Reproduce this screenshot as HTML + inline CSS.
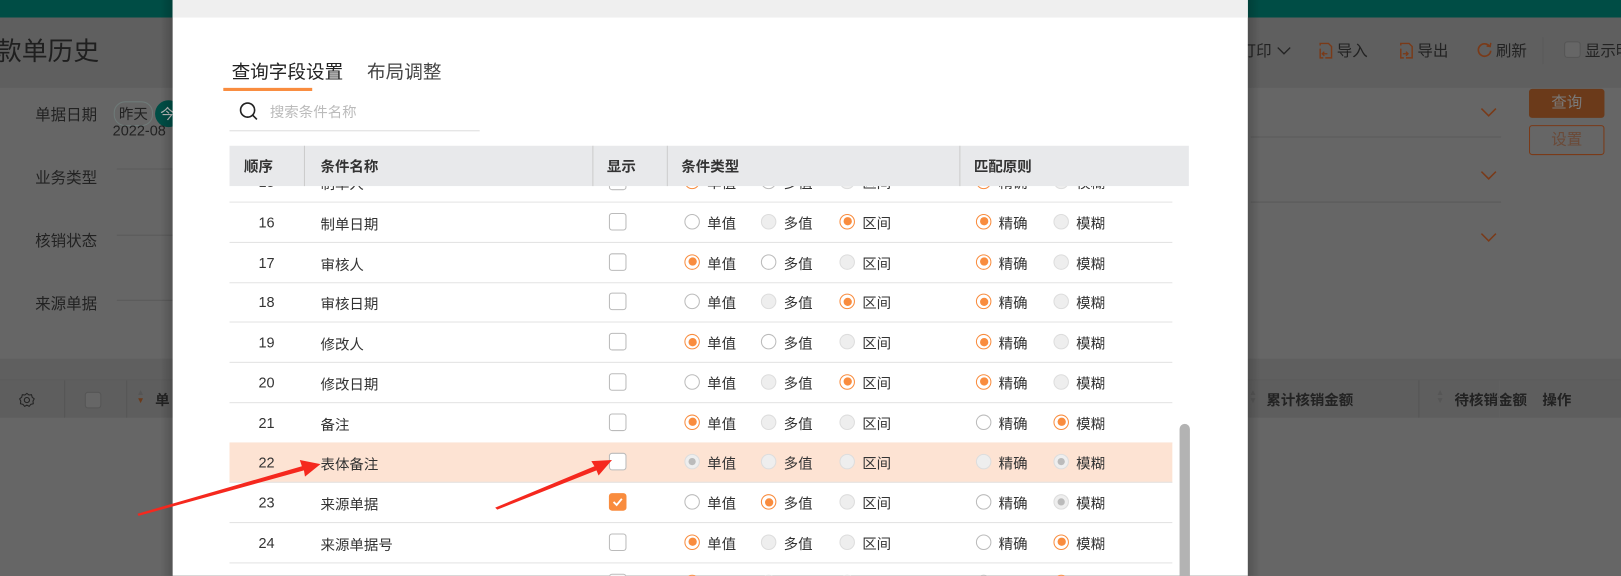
<!DOCTYPE html>
<html><head><meta charset="utf-8"><style>
html,body{margin:0;padding:0;width:1621px;height:576px;overflow:hidden;background:#666}
#w{position:absolute;left:0;top:0;width:1568px;height:557px;transform:scale(1.03380);transform-origin:0 0;font-family:"Liberation Sans","Noto Sans CJK SC",sans-serif;color:#333;overflow:hidden}
.a{position:absolute;white-space:nowrap}
.lbl{font-size:15px;color:#222}
.cb{position:absolute;width:15px;height:15px;border:1px solid #bbb;border-radius:3px;background:#fff}
.r{position:absolute;width:15px;height:15px;border-radius:50%;box-sizing:border-box}
.rw{border:1px solid #bbb;background:#fff}
.rd{border:1px solid #ddd;background:#eee}
.rs{border:1px solid #f98c3e;background:#fff}
.rs::after{content:"";position:absolute;left:2.5px;top:2.5px;width:8px;height:8px;border-radius:50%;background:#f98c3e}
.rg{border:1px solid #ddd;background:#eee}
.rg::after{content:"";position:absolute;left:3px;top:3px;width:7px;height:7px;border-radius:50%;background:#bbb}
.t{position:absolute;font-size:14px;color:#333}
.row{position:absolute;left:222px;width:912px;height:38px;border-bottom:1px solid #e3e3e3}
</style></head><body><div id="w">
<div class="a" style="left:0;top:0;width:1568px;height:17px;background:#004d45"></div>
<div class="a" style="left:0;top:17px;width:1568px;height:68px;background:#5f5f5f"></div>
<div class="a" style="left:0;top:85px;width:1568px;height:262px;background:#666"></div>
<div class="a" style="left:0;top:347px;width:1568px;height:20px;background:#5f5f5f"></div>
<div class="a" style="left:0;top:367px;width:1568px;height:1px;background:#5a5a5a"></div>
<div class="a" style="left:0;top:368px;width:1568px;height:36px;background:#5e5e5e"></div>
<div class="a" style="left:0;top:404px;width:1568px;height:153px;background:#666"></div>
<div class="a" style="left:-4px;top:30px;font-size:25px;color:#1f1f1f">款单历史</div>
<div class="a lbl" style="left:34px;top:100px">单据日期</div>
<div class="a lbl" style="left:34px;top:161px">业务类型</div>
<div class="a lbl" style="left:34px;top:222px">核销状态</div>
<div class="a lbl" style="left:34px;top:283px">来源单据</div>
<div class="a" style="left:110px;top:98px;width:36px;height:22px;border:1px solid #6e7a78;border-radius:11px;font-size:14px;color:#222;text-align:center;line-height:22px">昨天</div>
<div class="a" style="left:150px;top:97px;width:26px;height:26px;border-radius:13px;background:#004d45;color:#bbb;font-size:14px;line-height:26px;text-indent:5px">今</div>
<div class="a" style="left:109px;top:118px;font-size:14px;color:#222">2022-08</div>
<div class="a" style="left:1200px;top:38px;font-size:15px;color:#222">打印</div>
<svg class="a" style="left:1235px;top:44px" width="14" height="10"><path d="M1 2l6 6 6-6" fill="none" stroke="#222" stroke-width="1.3"/></svg>
<svg class="a" style="left:1274px;top:40px" width="16" height="18"><path d="M3 4V2h8l3 3v11H8M3 7v9h3" fill="none" stroke="#7a3a18" stroke-width="1.4"/><path d="M10 12H5m2-2l-2 2 2 2" fill="none" stroke="#7a3a18" stroke-width="1.3"/></svg>
<div class="a" style="left:1293px;top:38px;font-size:15px;color:#222">导入</div>
<svg class="a" style="left:1352px;top:40px" width="16" height="18"><path d="M3 4V2h8l3 3v11H8M3 7v9h3" fill="none" stroke="#7a3a18" stroke-width="1.4"/><path d="M5 12h5m-2-2l2 2-2 2" fill="none" stroke="#7a3a18" stroke-width="1.3"/></svg>
<div class="a" style="left:1371px;top:38px;font-size:15px;color:#222">导出</div>
<svg class="a" style="left:1428px;top:40px" width="16" height="16"><path d="M13 5A6 6 0 1 0 14 9" fill="none" stroke="#7a3a18" stroke-width="1.6"/><path d="M10 4.5l3.5.5.5-3.5" fill="none" stroke="#7a3a18" stroke-width="1.4"/></svg>
<div class="a" style="left:1447px;top:38px;font-size:15px;color:#222">刷新</div>
<div class="a" style="left:1492px;top:36px;width:1px;height:26px;background:#5a5a5a"></div>
<div class="a" style="left:1513px;top:40px;width:14px;height:14px;border:1px solid #555;border-radius:3px;background:#666"></div>
<div class="a" style="left:1533px;top:38px;font-size:15px;color:#222">显示明</div>
<div class="a" style="left:1210px;top:132px;width:242px;height:1px;background:#5a5a5a"></div>
<div class="a" style="left:1210px;top:195px;width:242px;height:1px;background:#5a5a5a"></div>
<div class="a" style="left:113px;top:163px;width:60px;height:1px;background:#5a5a5a"></div>
<div class="a" style="left:113px;top:227px;width:60px;height:1px;background:#5a5a5a"></div>
<div class="a" style="left:113px;top:290px;width:60px;height:1px;background:#5a5a5a"></div>
<svg class="a" style="left:1430px;top:100px" width="20" height="140"><g fill="none" stroke="#7a3a18" stroke-width="1.5"><path d="M3 5l7 7 7-7"/><path d="M3 66l7 7 7-7"/><path d="M3 126l7 7 7-7"/></g></svg>
<div class="a" style="left:1479px;top:86px;width:73px;height:28px;background:#6b3a1a;border-radius:3px;color:#7a7a7a;font-size:15px;text-align:center;line-height:28px">查询</div>
<div class="a" style="left:1479px;top:121px;width:71px;height:27px;border:1px solid #7a3a18;border-radius:3px;color:#6b4a38;font-size:15px;text-align:center;line-height:27px">设置</div>
<svg class="a" style="left:18px;top:379px" width="16" height="16"><circle cx="8" cy="8" r="2.5" fill="none" stroke="#222"/><path d="M8 1.5l2 1.6 2.5-.3.6 2.4 2 1.6-1.2 2.2.3 2.5-2.4.6-1.6 2-2.2-1.2-2.2 1.2-1.6-2-2.4-.6.3-2.5L1 6.8l2-1.6.6-2.4 2.5.3z" fill="none" stroke="#222" stroke-width="1"/></svg>
<div class="a" style="left:62px;top:368px;width:1px;height:36px;background:#565656"></div>
<div class="a" style="left:82px;top:379px;width:14px;height:14px;border:1px solid #555;border-radius:3px;background:#666"></div>
<div class="a" style="left:122px;top:368px;width:1px;height:36px;background:#565656"></div>
<div class="a" style="left:132px;top:376px;font-size:8px;color:#555;line-height:8px">▲<br><span style="color:#6b3a1a">▼</span></div>
<div class="a" style="left:150px;top:377px;font-size:14px;font-weight:bold;color:#222">单</div>
<div class="a" style="left:1208px;top:376px;font-size:8px;color:#555;line-height:8px">▲<br>▼</div>
<div class="a" style="left:1225px;top:377px;font-size:14px;font-weight:bold;color:#222">累计核销金额</div>
<div class="a" style="left:1372px;top:368px;width:1px;height:36px;background:#555"></div>
<div class="a" style="left:1389px;top:376px;font-size:8px;color:#555;line-height:8px">▲<br>▼</div>
<div class="a" style="left:1407px;top:377px;font-size:14px;font-weight:bold;color:#222">待核销金额</div>
<div class="a" style="left:1492px;top:377px;font-size:14px;font-weight:bold;color:#222">操作</div>
<div class="a" style="left:1450px;top:368px;width:1px;height:36px;background:#606060"></div>
<div class="a" style="left:155px;top:0;width:12px;height:557px;background:linear-gradient(to right,rgba(0,0,0,0),rgba(0,0,0,.18))"></div>
<div class="a" style="left:1207px;top:0;width:12px;height:557px;background:linear-gradient(to left,rgba(0,0,0,0),rgba(0,0,0,.18))"></div>
<div class="a" style="left:167px;top:0;width:1040px;height:557px;background:#fff"></div>
<div class="a" style="left:167px;top:0;width:1040px;height:17px;background:#efefef"></div>
<div class="a" style="left:224px;top:56px;font-size:18px;color:#222">查询字段设置</div>
<div class="a" style="left:355px;top:56px;font-size:18px;color:#444">布局调整</div>
<div class="a" style="left:216px;top:85px;width:86px;height:3px;background:#f98c3e"></div>
<svg class="a" style="left:231px;top:98px" width="20" height="20"><circle cx="8.5" cy="8.5" r="6.8" fill="none" stroke="#222" stroke-width="1.6"/><path d="M13.5 13.5l4 4" stroke="#222" stroke-width="1.6"/></svg>
<div class="a" style="left:261px;top:98px;font-size:14px;color:#bbb">搜索条件名称</div>
<div class="a" style="left:222px;top:126px;width:242px;height:1px;background:#ddd"></div>
<div id="rows"></div>
<div class="a" style="left:222px;top:141px;width:928px;height:39px;background:#e8e9eb"></div>
<div class="a" style="left:294px;top:141px;width:1px;height:39px;background:#ccc"></div>
<div class="a" style="left:573px;top:141px;width:1px;height:39px;background:#ccc"></div>
<div class="a" style="left:645px;top:141px;width:1px;height:39px;background:#ccc"></div>
<div class="a" style="left:928px;top:141px;width:1px;height:39px;background:#ccc"></div>
<div class="a" style="left:236px;top:151px;font-size:14px;font-weight:bold;color:#333">顺序</div>
<div class="a" style="left:310px;top:151px;font-size:14px;font-weight:bold;color:#333">条件名称</div>
<div class="a" style="left:587px;top:151px;font-size:14px;font-weight:bold;color:#333">显示</div>
<div class="a" style="left:659px;top:151px;font-size:14px;font-weight:bold;color:#333">条件类型</div>
<div class="a" style="left:942px;top:151px;font-size:14px;font-weight:bold;color:#333">匹配原则</div>
<div class="a" style="left:1141px;top:410px;width:10px;height:160px;background:#b3b3b3;border-radius:5px"></div>
<svg class="a" style="left:0;top:0" width="1568" height="557"><polygon points="133,497 292,451 290,445 310,449 295,461 294,455 134,499" fill="#f5281e"/><polygon points="479,491 575,451 572,446 592,445 579,460 577,455 481,493" fill="#f5281e"/></svg>
</div>
<script>
var d=[
[15,"制单人",0,"swd","sd"],
[16,"制单日期",0,"wds","sd"],
[17,"审核人",0,"swd","sd"],
[18,"审核日期",0,"wds","sd"],
[19,"修改人",0,"swd","sd"],
[20,"修改日期",0,"wds","sd"],
[21,"备注",0,"sdd","ws"],
[22,"表体备注",0,"gdd","dg"],
[23,"来源单据",1,"wsd","wg"],
[24,"来源单据号",0,"sdd","ws"],
[25,"",0,"sdd","ws"]];
var rx=[662,736,812,944,1019],lb=["单值","多值","区间","精确","模糊"],h="";
d.forEach(function(r,i){var top=157+i*38.75;var c=top+19;
h+='<div class="row" style="top:'+top+'px;'+(r[0]==22?'background:#fde3d3;':'')+'"></div>';
h+='<div class="t" style="left:250px;top:'+(c-8)+'px">'+r[0]+'</div>';
h+='<div class="t" style="left:310px;top:'+(c-8)+'px">'+r[1]+'</div>';
if(r[2])h+='<div class="cb" style="left:589px;top:'+(c-9)+'px;background:#f98c3e;border-color:#f98c3e"><svg width="15" height="15" style="position:absolute;left:0;top:0"><path d="M3.5 7.5l3 3 5-6" fill="none" stroke="#fff" stroke-width="1.8"/></svg></div>';
else h+='<div class="cb" style="left:589px;top:'+(c-9)+'px"></div>';
var s=r[3]+r[4];
for(var k=0;k<5;k++){h+='<div class="r r'+s[k]+'" style="left:'+rx[k]+'px;top:'+(c-8)+'px"></div><div class="t" style="left:'+(rx[k]+22)+'px;top:'+(c-9)+'px">'+lb[k]+'</div>';}
});
document.getElementById('rows').outerHTML=h;
</script>
</body></html>
